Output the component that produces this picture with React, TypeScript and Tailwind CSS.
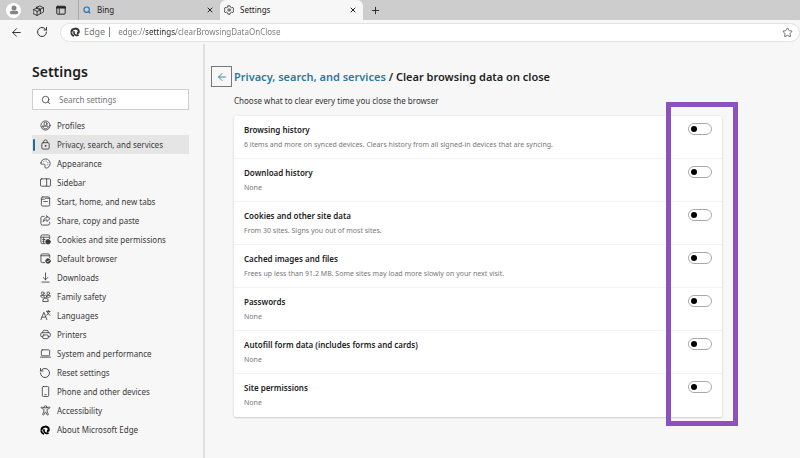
import type { ReactNode } from 'react'
import clsx from 'clsx'
import { ArrowLeft, Plus, RotateCcw, RotateCw, Search, Star, X } from 'lucide-react'

type IconProps = { children: ReactNode; className?: string }

function Icon({ children, className = 'size-[11px]' }: IconProps) {
  return (
    <svg
      className={className}
      viewBox="0 0 24 24"
      fill="none"
      stroke="currentColor"
      strokeWidth={1.8}
      strokeLinecap="round"
      strokeLinejoin="round"
      aria-hidden="true"
    >
      {children}
    </svg>
  )
}

function EdgeLogo({ className }: { className?: string }) {
  return (
    <svg className={className} viewBox="0 0 24 24" fill="none" stroke="currentColor" aria-hidden="true">
      <path strokeWidth="5" d="M3.500 13A9 9 0 0 1 12 4" />
      <path strokeWidth="5" d="M12 3.500c5 0 9 3.500 9 7.500 0 2.500-1.800 4-4.500 4" />
      <path strokeWidth="4" d="M10 10c-2 4.500 1 9 5.500 10 2 .3 3.700-.2 5-1.500" />
      <path strokeWidth="4" d="M3 13c0 4 3 7.500 7 8.500" />
    </svg>
  )
}

const navItems = [
  {
    label: 'Profiles',
    icon: (
      <Icon>
        <circle cx="12" cy="12" r="10" />
        <circle cx="12" cy="8.500" r="3.500" />
        <path d="M6 13.500h12c0 4-2.500 5.500-6 5.500s-6-1.500-6-5.500z" />
      </Icon>
    ),
  },
  {
    label: 'Privacy, search, and services',
    icon: (
      <Icon>
        <rect x="4" y="8" width="16" height="14" rx="2.500" />
        <path d="M8 8V6a4 4 0 0 1 8 0v2" />
        <circle cx="12" cy="15" r="1" fill="currentColor" />
      </Icon>
    ),
  },
  {
    label: 'Appearance',
    icon: (
      <Icon>
        <path d="M2 11C3 5 7 2 12 2c6 0 10 4.500 10 10s-4 10-8.500 10c-3 0-3-2-2.500-4.500.6-3-1-4.500-3.500-4-3 .7-5.700.5-5.500-2.500z" />
        <path d="M8 8h.1M13 6.500h.1M17 10h.1M17 15h.1" />
      </Icon>
    ),
  },
  {
    label: 'Sidebar',
    icon: (
      <Icon>
        <rect x="1" y="4" width="22" height="16" rx="2" />
        <path d="M14.500 4v16" />
      </Icon>
    ),
  },
  {
    label: 'Start, home, and new tabs',
    icon: (
      <Icon>
        <rect x="3" y="2" width="18" height="20" rx="3" />
        <path d="M3 7h7l2-2h9M8 12h8" />
      </Icon>
    ),
  },
  {
    label: 'Share, copy and paste',
    icon: (
      <Icon>
        <path d="M9 3H5.500A3.500 3.500 0 0 0 2 6.500v12A3.500 3.500 0 0 0 5.500 22h12a3.500 3.500 0 0 0 3.500-3.500V16" />
        <path d="M15 2l7 6-7 6v-3.500c-4 0-6.500 1.500-8 4.500 0-5.500 3-9 8-9.500z" />
      </Icon>
    ),
  },
  {
    label: 'Cookies and site permissions',
    icon: (
      <Icon>
        <path d="M11 21H5a3 3 0 0 1-3-3V5a3 3 0 0 1 3-3h13a3 3 0 0 1 3 3v5M2 7h19M6 12h5M6 16h3M8 7v14" />
        <circle cx="17.500" cy="17" r="5" fill="currentColor" />
      </Icon>
    ),
  },
  {
    label: 'Default browser',
    icon: (
      <Icon>
        <path d="M10 21H5a3 3 0 0 1-3-3V5a3 3 0 0 1 3-3h13a3 3 0 0 1 3 3v5M2 6h19" />
        <circle cx="17.500" cy="17.500" r="5" fill="currentColor" />
        <path d="M15 17.500l2 2 3.500-4" stroke="#f7f7f7" />
      </Icon>
    ),
  },
  {
    label: 'Downloads',
    icon: (
      <Icon>
        <path d="M12 2v15M7 12l5 5 5-5M4 22h16" />
      </Icon>
    ),
  },
  {
    label: 'Family safety',
    icon: (
      <Icon>
        <circle cx="6" cy="5" r="3" />
        <circle cx="18" cy="5" r="3" />
        <circle cx="12" cy="12" r="3" />
        <path d="M6 22c0-4 2-6 6-6s6 2 6 6zM7.500 15C4 15 1.500 13 1.500 10H8M16.500 15c3.500 0 6-2 6-5H16" />
      </Icon>
    ),
  },
  {
    label: 'Languages',
    icon: (
      <Icon>
        <path d="M2 21L8.500 5 15 21M4.500 15.500h8M14 3h8M18 1v2M20.500 3c-.5 4-2.500 6.500-6 8M16 5c1 3 3 5 6 6.500" />
      </Icon>
    ),
  },
  {
    label: 'Printers',
    icon: (
      <Icon>
        <path d="M6 8V6a3 3 0 0 1 3-3h6a3 3 0 0 1 3 3v2" />
        <path d="M6 17H4a2.500 2.500 0 0 1-2.500-2.500V11a3 3 0 0 1 3-3h15a3 3 0 0 1 3 3v3.500A2.500 2.500 0 0 1 20 17h-2" />
        <rect x="6" y="13" width="12" height="8" rx="2" />
      </Icon>
    ),
  },
  {
    label: 'System and performance',
    icon: (
      <Icon>
        <rect x="3" y="4" width="18" height="13" rx="2" />
        <path d="M1 20h22" />
      </Icon>
    ),
  },
  { label: 'Reset settings', icon: <RotateCcw className="size-3" strokeWidth={1.8} /> },
  {
    label: 'Phone and other devices',
    icon: (
      <Icon>
        <rect x="5" y="1" width="14" height="22" rx="2.500" />
        <path d="M10.500 19h3" />
      </Icon>
    ),
  },
  {
    label: 'Accessibility',
    icon: (
      <Icon>
        <circle cx="12" cy="4" r="2.500" />
        <path d="M9.500 6L4 4.500C2.500 4 1.800 6.500 3.500 7.200L8.500 9.500v4L6 20c-.6 2 1.600 3 2.500 1.200L12 15l3.500 6.200c.9 1.800 3.100.8 2.500-1.200l-2.500-6.500v-4l5-2.300c1.700-.7 1-3.200-.5-2.700L14.500 6" />
      </Icon>
    ),
  },
  { label: 'About Microsoft Edge', icon: <EdgeLogo className="size-[10px] text-black" /> },
]

const clearOptions = [
  {
    title: 'Browsing history',
    detail: '6 items and more on synced devices. Clears history from all signed-in devices that are syncing.',
  },
  { title: 'Download history', detail: 'None' },
  { title: 'Cookies and other site data', detail: 'From 30 sites. Signs you out of most sites.' },
  {
    title: 'Cached images and files',
    detail: 'Frees up less than 91.2 MB. Some sites may load more slowly on your next visit.',
  },
  { title: 'Passwords', detail: 'None' },
  { title: 'Autofill form data (includes forms and cards)', detail: 'None' },
  { title: 'Site permissions', detail: 'None' },
]

function TabStrip() {
  return (
    <div className="flex h-5 items-stretch bg-[#cdcdcd] text-[#222]">
      <div className="flex w-[79px] shrink-0 items-center justify-between border-r border-[#aaa] pl-1.5 pr-3">
        <button aria-label="Profile" className="flex size-[15px] items-center justify-center rounded-full bg-white">
          <svg className="size-[10px]" viewBox="0 0 24 24" fill="#858585" aria-hidden="true">
            <circle cx="12" cy="7" r="6" />
            <rect x="2" y="14" width="20" height="8" rx="4" />
          </svg>
        </button>
        <button aria-label="Workspaces">
          <Icon>
            <path d="M8 5l7-3 8 4v9l-7 4M8 5v3M8 5l8 4 7-3M16 9v4" />
            <path d="M1 10l7-3 8 4v8l-7 4-8-4zM1 10l8 4 7-3M9 14v9" />
          </Icon>
        </button>
        <button aria-label="Tab actions menu">
          <Icon className="size-[10px]">
            <rect x="2" y="3" width="20" height="19" rx="2" strokeWidth="2.400" />
            <path d="M2 6h20" strokeWidth="5" />
            <path d="M8 8v13" />
          </Icon>
        </button>
      </div>
      <div className="flex w-[141px] shrink-0 items-center pl-1 pr-1.5">
        <Search className="size-[8px] text-[#2477b8]" strokeWidth={3.5} />
        <span className="ml-1.5 flex-1">Bing</span>
        <button aria-label="Close Bing tab">
          <X className="size-[8px]" strokeWidth={3} />
        </button>
      </div>
      <div className="flex w-[143px] shrink-0 items-center rounded-t-md bg-[#f7f7f7] pl-1 pr-1.5">
        <Icon className="size-[10px]">
          <path d="M9.500 2h5l.8 3.200 2.700 1.500 3.200-.9 2.300 4.200-2.200 2 2.200 2-2.300 4.200-3.200-.9-2.700 1.500-.8 3.200h-5l-.8-3.200L6 17.300l-3.200.9L.5 14l2.200-2L.5 10l2.300-4.200 3.200.9 2.700-1.500z" />
          <circle cx="12" cy="12" r="3" />
        </Icon>
        <span className="ml-1.5 flex-1">Settings</span>
        <button aria-label="Close Settings tab">
          <X className="size-[8px]" strokeWidth={3} />
        </button>
      </div>
      <button aria-label="New tab" className="ml-[7px]">
        <Plus className="size-[11px]" strokeWidth={2} />
      </button>
    </div>
  )
}

function Toolbar() {
  return (
    <div className="flex h-6 items-center text-[#333]">
      <button aria-label="Back" className="ml-[10px]">
        <ArrowLeft className="size-[13px]" strokeWidth={1.8} />
      </button>
      <button aria-label="Refresh" className="ml-[13px]">
        <RotateCw className="size-[12px]" strokeWidth={2} />
      </button>
      <div className="ml-3 flex h-[19px] flex-1 items-center rounded-full border border-[#e2e2e2] bg-white pl-[9px] pr-1.5">
        <EdgeLogo className="size-[10px] text-[#333]" />
        <span className="ml-1 text-[9px] text-[#777]">Edge</span>
        <span className="ml-1 h-[10px] w-px bg-[#888]" />
        {/* the host part of the address is darker than the rest */}
        <input
          aria-label="Address"
          defaultValue="edge://settings/clearBrowsingDataOnClose"
          className="ml-2 min-w-0 flex-1 bg-[linear-gradient(90deg,#777_28px,#222_28px,#222_58px,#777_58px)] bg-clip-text text-transparent outline-none"
        />
        <button aria-label="Add this page to favorites" className="text-[#666]">
          <Star className="size-[11px]" strokeWidth={2} />
        </button>
      </div>
    </div>
  )
}

function Sidebar() {
  return (
    <aside className="w-[205px] shrink-0 border-r-2 border-[#e0e0e0] pl-8 pr-[14px] pt-[19px]">
      <h2 className="text-[14px] font-semibold leading-[18px] text-[#1b1b1b]">Settings</h2>
      <label className="mt-2 flex h-[21px] items-center border border-[#cfcfcf] bg-white pl-2">
        <Search className="size-[10px] text-[#444]" strokeWidth={2} />
        <input
          type="search"
          aria-label="Search settings"
          placeholder="Search settings"
          className="ml-2 min-w-0 flex-1 outline-none placeholder:text-[#777]"
        />
      </label>
      <nav className="mt-1.5">
        <ul>
          {navItems.map((item, index) => (
            <li key={item.label}>
              <a
                href="#"
                aria-current={index === 1 ? 'page' : undefined}
                className={clsx('flex h-[19px] items-center text-[#3a3a3a]', index === 1 && 'bg-[#e5e5e5]')}
              >
                <span className={clsx('ml-px h-3 w-0.5 rounded-full', index === 1 && 'bg-[#1c6c9c]')} />
                <span className="ml-1 flex w-3 justify-center">{item.icon}</span>
                <span className="ml-1.5 whitespace-nowrap">{item.label}</span>
              </a>
            </li>
          ))}
        </ul>
      </nav>
    </aside>
  )
}

export default function App() {
  return (
    <div className="flex min-h-screen flex-col bg-[#f7f7f7] font-['Noto_Sans','Open_Sans',sans-serif] text-[8px]">
      <header>
        <TabStrip />
        <Toolbar />
      </header>

      <div className="flex flex-1">
        <Sidebar />

        <main className="min-w-0 flex-1 pl-1.5 pr-4 pt-[22px]">
          <div className="flex items-center gap-0.5">
            <button
              aria-label="Go back"
              className="flex size-[21px] shrink-0 items-center justify-center border border-[#777] text-[#2b7a9e]"
            >
              <ArrowLeft className="size-[12px]" strokeWidth={1.8} />
            </button>
            <h1 className="text-[11px] font-semibold leading-5 text-[#1f1f1f]">
              <a href="#" className="text-[#2b7a9e]">
                Privacy, search, and services
              </a>{' '}
              / Clear browsing data on close
            </h1>
          </div>

          <div className="max-w-[511px] pl-[23px]">
            <p className="mt-1.5 leading-4 text-[#333]">Choose what to clear every time you close the browser</p>

            <div className="relative mt-[7px]">
              <ul className="divide-y divide-[#f3f3f3] rounded-xs bg-white pb-px shadow-[0_0_2px_rgba(0,0,0,0.12),0_1px_2px_rgba(0,0,0,0.14)]">
                {clearOptions.map((option) => (
                  <li key={option.title}>
                    <label className="flex min-h-[42px] items-start justify-between pb-1 pl-[10px] pr-[10px] pt-[7px]">
                      <span>
                        <span className="block font-semibold leading-[14px] text-[#222]">{option.title}</span>
                        <span className="block text-[7px] leading-4 text-[#777]">{option.detail}</span>
                      </span>
                      <input
                        type="checkbox"
                        role="switch"
                        className="flex h-3 w-6 shrink-0 appearance-none items-center rounded-full border border-[#aaa] bg-white px-0.5 before:size-1.5 before:rounded-full before:bg-black checked:justify-end"
                      />
                    </label>
                  </li>
                ))}
              </ul>
              {/* Highlight around the switches */}
              <div className="pointer-events-none absolute -bottom-[9px] -right-4 -top-[14px] w-[72px] border-[5px] border-[#8d50bf]" />
            </div>
          </div>
        </main>
      </div>
    </div>
  )
}
